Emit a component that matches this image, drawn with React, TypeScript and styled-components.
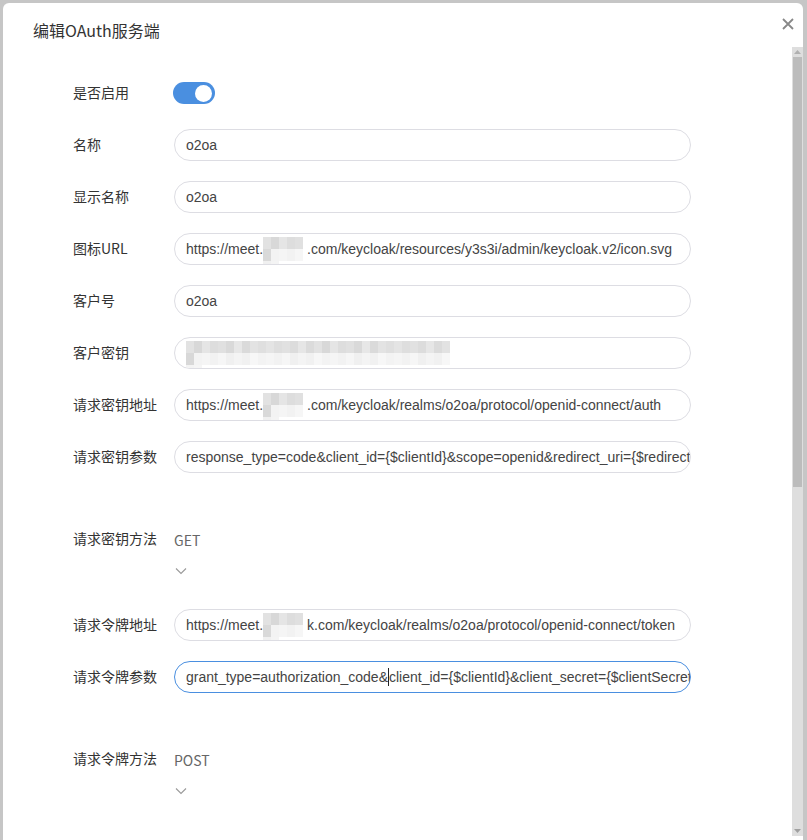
import React from "react";
import styled, { createGlobalStyle } from "styled-components";

const GlobalStyle = createGlobalStyle`
  html, body {
    margin: 0;
    padding: 0;
    overflow: hidden;
    background: #c6c6c6;
    font-family: "Liberation Sans", "Noto Sans CJK SC", sans-serif;
  }
`;

const Page = styled.div`
  width: 807px;
  height: 840px;
  padding: 3px 4px 0 3px;
  box-sizing: border-box;
  overflow: hidden;
`;

const Dialog = styled.div`
  width: 800px;
  height: 880px;
  background: #fff;
  border-radius: 6px 6px 0 0;
  display: flex;
  flex-direction: column;
`;

const Header = styled.div`
  height: 44px;
  display: flex;
  justify-content: space-between;
  align-items: flex-start;
  padding: 0 8px 0 30px;
`;

const Title = styled.div`
  margin-top: 17px;
  font-family: "Noto Sans CJK SC", sans-serif;
  font-size: 16px;
  line-height: 20px;
  color: #333;
`;

const Close = styled.div`
  margin-top: 14px;
  width: 14px;
  height: 14px;
  color: #888;
  display: flex;
`;

const BodyRow = styled.div`
  flex: 1;
  display: flex;
`;

const Content = styled.div`
  flex: 1;
  padding: 30px 0 0 70px;
  display: flex;
  flex-direction: column;
  gap: 20px;
`;

const Row = styled.div<{ $select?: boolean }>`
  display: flex;
  align-items: ${(p) => (p.$select ? "flex-start" : "center")};
  height: ${(p) => (p.$select ? "96px" : "32px")};
  padding-top: ${(p) => (p.$select ? "37px" : "0")};
  box-sizing: border-box;
`;

const Label = styled.div`
  width: 101px;
  flex-shrink: 0;
  margin-top: -2px;
  font-family: "Noto Sans CJK SC", sans-serif;
  font-size: 14px;
  line-height: 20px;
  color: #333;
`;

const Field = styled.div<{ $focused?: boolean }>`
  width: 517px;
  height: 32px;
  box-sizing: border-box;
  border: 1px solid ${(p) => (p.$focused ? "#4a8fe0" : "#dddde3")};
  border-radius: 16px;
  padding: 0 11px;
  display: flex;
  align-items: center;
  white-space: nowrap;
  overflow: hidden;
  font-size: 14px;
  color: #444;
`;

const Caret = styled.span`
  display: inline-block;
  flex-shrink: 0;
  width: 1px;
  height: 18px;
  background: #222;
`;

const Mosaic = styled.span<{ $w: number }>`
  display: inline-flex;
  flex-wrap: wrap;
  width: ${(p) => p.$w}px;
  height: 24px;
  flex-shrink: 0;
`;

const Cell = styled.span`
  width: 8px;
  height: 12px;
`;

const Toggle = styled.div`
  width: 42px;
  height: 22px;
  margin-left: -1px;
  border-radius: 11px;
  background: #4a8fe0;
  display: flex;
  align-items: center;
  justify-content: flex-end;
  padding: 0 3px;
  box-sizing: border-box;
`;

const Knob = styled.div`
  width: 17px;
  height: 17px;
  border-radius: 50%;
  background: #fff;
`;

const SelectBox = styled.div`
  display: flex;
  flex-direction: column;
  align-items: flex-start;
  gap: 17px;
`;

const SelectValue = styled.div`
  font-family: "Noto Sans CJK SC", sans-serif;
  font-size: 14px;
  line-height: 20px;
  color: #666;
`;

const Chevron = styled.div`
  margin-left: 1px;
  display: flex;
  color: #999;
`;

const Track = styled.div`
  width: 11px;
  height: 789px;
  background: #dedede;
  display: flex;
  flex-direction: column;
  align-items: center;
`;

const Arrow = styled.div`
  height: 10px;
  display: flex;
  align-items: center;
  justify-content: center;
`;

const Thumb = styled.div`
  width: 9px;
  height: 430px;
  background: #bcbcbc;
`;

const Spacer = styled.div`
  flex: 1;
`;

const grays = [
  "#e2e2e2", "#dcdcdc", "#e4e4e4", "#dadada", "#e0e0e0", "#d8d8d8", "#e6e6e6", "#dedede",
  "#e3e3e3", "#d9d9d9", "#e5e5e5", "#dbdbdb", "#e1e1e1", "#dfdfdf", "#e7e7e7", "#dddddd",
];
const lows = ["#f3f3f3", "#f6f6f6", "#f1f1f1", "#f5f5f5", "#f0f0f0", "#f7f7f7", "#f2f2f2", "#f4f4f4"];

// pixelated block standing in for the redacted parts of the values
const Blur = ({ w }: { w: number }) => {
  const n = Math.ceil(w / 8);
  const cells: React.ReactElement[] = [];
  for (let i = 0; i < n; i++) cells.push(<Cell key={"a" + i} style={{ background: grays[(i * 5) % grays.length] }} />);
  for (let i = 0; i < n; i++) cells.push(<Cell key={"b" + i} style={{ background: lows[(i * 3) % lows.length] }} />);
  return <Mosaic $w={w}>{cells}</Mosaic>;
};

const ChevronIcon = () => (
  <svg width="12" height="8" viewBox="0 0 12 8" fill="none">
    <path d="M1 1.5 L6 6.5 L11 1.5" stroke="currentColor" strokeWidth="1.1" />
  </svg>
);

const SelectRow = ({ label, value }: { label: string; value: string }) => (
  <Row $select>
    <Label>{label}</Label>
    <SelectBox>
      <SelectValue>{value}</SelectValue>
      <Chevron>
        <ChevronIcon />
      </Chevron>
    </SelectBox>
  </Row>
);

const TextRow = ({ label, children, focused }: { label: string; children: React.ReactNode; focused?: boolean }) => (
  <Row>
    <Label>{label}</Label>
    <Field $focused={focused}>{children}</Field>
  </Row>
);

export default function App() {
  return (
    <Page>
      <GlobalStyle />
      <Dialog>
        <Header>
          <Title>编辑OAuth服务端</Title>
          <Close>
            <svg width="14" height="14" viewBox="0 0 14 14">
              <path d="M2 2 L12 12 M12 2 L2 12" stroke="currentColor" strokeWidth="1.8" />
            </svg>
          </Close>
        </Header>
        <BodyRow>
          <Content>
            <Row>
              <Label>是否启用</Label>
              <Toggle>
                <Knob />
              </Toggle>
            </Row>
            <TextRow label="名称">o2oa</TextRow>
            <TextRow label="显示名称">o2oa</TextRow>
            <TextRow label="图标URL">
              https://meet.<Blur w={44} />.com/keycloak/resources/y3s3i/admin/keycloak.v2/icon.svg
            </TextRow>
            <TextRow label="客户号">o2oa</TextRow>
            <TextRow label="客户密钥">
              <Blur w={268} />
            </TextRow>
            <TextRow label="请求密钥地址">
              https://meet.<Blur w={44} />.com/keycloak/realms/o2oa/protocol/openid-connect/auth
            </TextRow>
            <TextRow label="请求密钥参数">
              response_type=code&amp;client_id={"{$clientId}"}&amp;scope=openid&amp;redirect_uri={"{$redirectUri}"}
            </TextRow>
            <SelectRow label="请求密钥方法" value="GET" />
            <TextRow label="请求令牌地址">
              https://meet.<Blur w={44} />k.com/keycloak/realms/o2oa/protocol/openid-connect/token
            </TextRow>
            <TextRow label="请求令牌参数" focused>
              grant_type=authorization_code&amp;<Caret />client_id={"{$clientId}"}&amp;client_secret={"{$clientSecret}"}
            </TextRow>
            <SelectRow label="请求令牌方法" value="POST" />
          </Content>
          <Track>
            <Arrow>
              <svg width="7" height="4" viewBox="0 0 7 4">
                <path d="M0 4 L3.5 0 L7 4 Z" fill="#b0b0b0" />
              </svg>
            </Arrow>
            <Thumb />
            <Spacer />
            <Arrow>
              <svg width="7" height="4" viewBox="0 0 7 4">
                <path d="M0 0 L3.5 4 L7 0 Z" fill="#a0a0a0" />
              </svg>
            </Arrow>
          </Track>
        </BodyRow>
      </Dialog>
    </Page>
  );
}
